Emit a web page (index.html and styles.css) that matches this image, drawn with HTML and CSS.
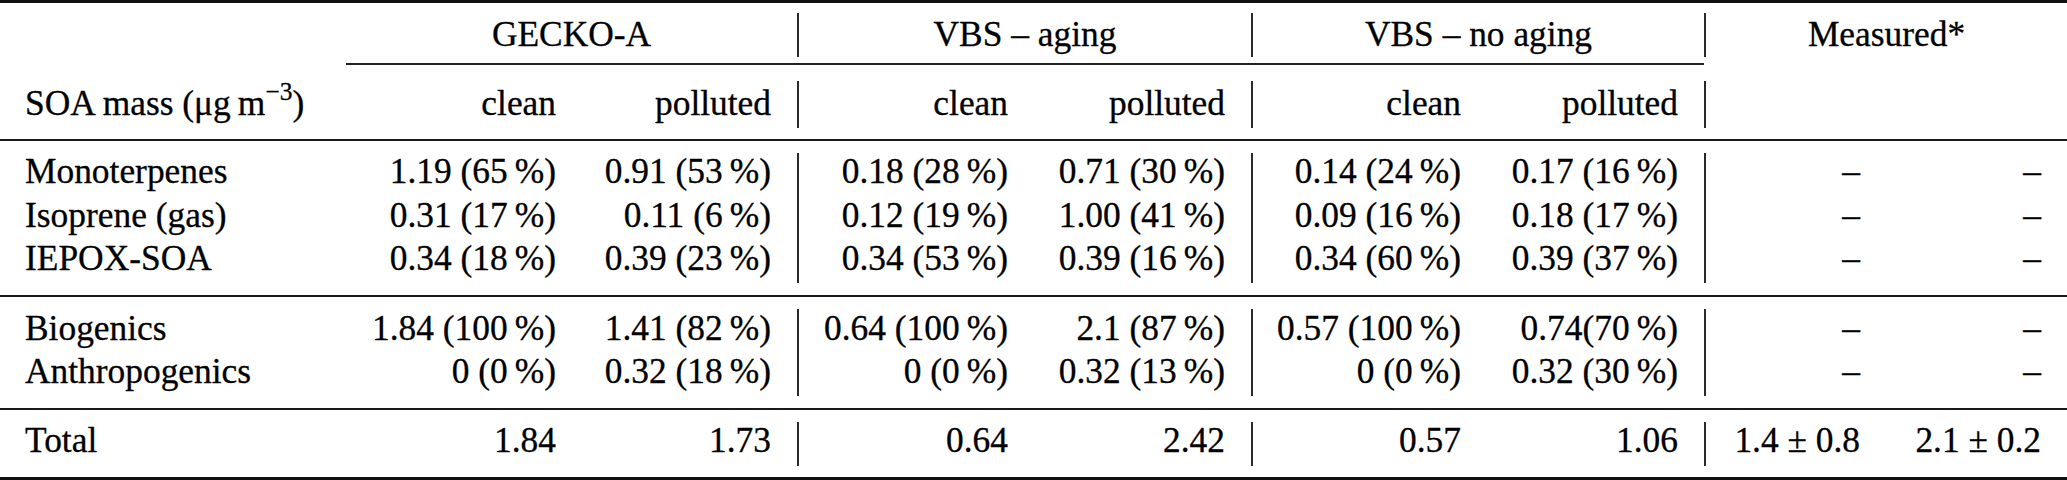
FILE: index.html
```html
<!DOCTYPE html>
<html lang="en">
<head>
<meta charset="utf-8">
<title>SOA mass table</title>
<link rel="stylesheet" href="styles.css">
</head>
<body>
<div class="tbl">
  <div class="grp head1">
    <div class="c lab"></div>
    <div class="c span2">GECKO-A</div>
    <div class="c span2 bar">VBS – aging</div>
    <div class="c span2 bar">VBS – no aging</div>
    <div class="c span2 bar">Measured*</div>
    <div class="cmid"></div>
  </div>
  <div class="grp head2">
    <div class="c lab">SOA mass (μg&thinsp;m<sup class="sup">−3</sup>)</div>
    <div class="c">clean</div>
    <div class="c">polluted</div>
    <div class="c bar">clean</div>
    <div class="c">polluted</div>
    <div class="c bar">clean</div>
    <div class="c">polluted</div>
    <div class="c bar"></div>
    <div class="c"></div>
  </div>
  <div class="grp body1">
    <div class="c lab">Monoterpenes</div>
    <div class="c">1.19 (65&thinsp;%)</div>
    <div class="c">0.91 (53&thinsp;%)</div>
    <div class="c bar">0.18 (28&thinsp;%)</div>
    <div class="c">0.71 (30&thinsp;%)</div>
    <div class="c bar">0.14 (24&thinsp;%)</div>
    <div class="c">0.17 (16&thinsp;%)</div>
    <div class="c bar">–</div>
    <div class="c">–</div>

    <div class="c lab">Isoprene (gas)</div>
    <div class="c">0.31 (17&thinsp;%)</div>
    <div class="c">0.11 (6&thinsp;%)</div>
    <div class="c bar">0.12 (19&thinsp;%)</div>
    <div class="c">1.00 (41&thinsp;%)</div>
    <div class="c bar">0.09 (16&thinsp;%)</div>
    <div class="c">0.18 (17&thinsp;%)</div>
    <div class="c bar">–</div>
    <div class="c">–</div>

    <div class="c lab">IEPOX-SOA</div>
    <div class="c">0.34 (18&thinsp;%)</div>
    <div class="c">0.39 (23&thinsp;%)</div>
    <div class="c bar">0.34 (53&thinsp;%)</div>
    <div class="c">0.39 (16&thinsp;%)</div>
    <div class="c bar">0.34 (60&thinsp;%)</div>
    <div class="c">0.39 (37&thinsp;%)</div>
    <div class="c bar">–</div>
    <div class="c">–</div>
  </div>
  <div class="grp body2">
    <div class="c lab">Biogenics</div>
    <div class="c">1.84 (100&thinsp;%)</div>
    <div class="c">1.41 (82&thinsp;%)</div>
    <div class="c bar">0.64 (100&thinsp;%)</div>
    <div class="c">2.1 (87&thinsp;%)</div>
    <div class="c bar">0.57 (100&thinsp;%)</div>
    <div class="c">0.74(70&thinsp;%)</div>
    <div class="c bar">–</div>
    <div class="c">–</div>

    <div class="c lab">Anthropogenics</div>
    <div class="c">0 (0&thinsp;%)</div>
    <div class="c">0.32 (18&thinsp;%)</div>
    <div class="c bar">0 (0&thinsp;%)</div>
    <div class="c">0.32 (13&thinsp;%)</div>
    <div class="c bar">0 (0&thinsp;%)</div>
    <div class="c">0.32 (30&thinsp;%)</div>
    <div class="c bar">–</div>
    <div class="c">–</div>
  </div>
  <div class="grp total">
    <div class="c lab">Total</div>
    <div class="c">1.84</div>
    <div class="c">1.73</div>
    <div class="c bar">0.64</div>
    <div class="c">2.42</div>
    <div class="c bar">0.57</div>
    <div class="c">1.06</div>
    <div class="c bar">1.4&#8197;±&#8197;0.8</div>
    <div class="c">2.1&#8197;±&#8197;0.2</div>
  </div>
</div>
</body>
</html>
```

FILE: styles.css
```css
* { box-sizing: border-box; }
html, body { margin: 0; padding: 0; background: #fff; }
body {
  font-family: "Liberation Serif", "Times New Roman", Tinos, "DejaVu Serif", serif;
  font-size: 35.4px;
  color: #000;
  -webkit-text-stroke: 0.3px #000;
}
.tbl {
  width: 2067px;
  border-top: 3px solid #111;
}
.grp {
  display: grid;
  grid-template-columns: 346px 236px 215px 237px 217px 236px 217px 182px 181px;
}
.c {
  line-height: 37px;
  padding: 0.6px 26px 5.8px 0;
  text-align: right;
  white-space: nowrap;
}
.lab { text-align: left; padding-left: 25px; }
.bar { border-left: 2px solid #2a2a2a; }
.span2 { grid-column: span 2; text-align: center; padding-right: 0; }

.head1 { padding-top: 10.3px; }
.head1 .c { padding-top: 3px; padding-bottom: 4px; }
.cmid {
  grid-column: 2 / 8;
  height: 2px;
  margin-top: 6.2px;
  background: #222;
}
.head2 {
  padding-top: 15.5px;
  padding-bottom: 11.8px;
  border-bottom: 2px solid #1a1a1a;
}
.head2 .c { padding-top: 3.6px; padding-bottom: 6.1px; }
.sup {
  font-size: 0.72em;
  line-height: 0;
  vertical-align: 0.6em;
}
.body1 {
  padding-top: 11.2px;
  padding-bottom: 12.1px;
  border-bottom: 2px solid #1a1a1a;
}
.body2 {
  padding-top: 12px;
  padding-bottom: 12.7px;
  border-bottom: 2px solid #1a1a1a;
}
.total {
  padding-top: 11.2px;
  padding-bottom: 11px;
  border-bottom: 3px solid #111;
}
.total .c { padding-bottom: 6.7px; }
```
